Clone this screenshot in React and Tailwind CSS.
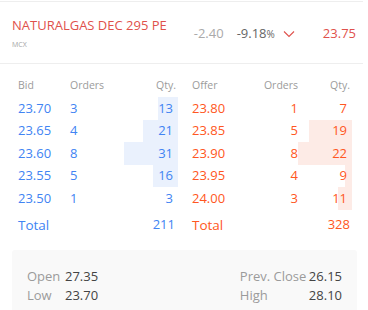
const bids = [
  { price: "23.70", orders: 3, qty: 13, bar: 20 },
  { price: "23.65", orders: 4, qty: 21, bar: 35 },
  { price: "23.60", orders: 8, qty: 31, bar: 54 },
  { price: "23.55", orders: 5, qty: 16, bar: 25 },
  { price: "23.50", orders: 1, qty: 3, bar: 0 },
];

const offers = [
  { price: "23.80", orders: 1, qty: 7, bar: 0 },
  { price: "23.85", orders: 5, qty: 19, bar: 43 },
  { price: "23.90", orders: 8, qty: 22, bar: 54 },
  { price: "23.95", orders: 4, qty: 9, bar: 7 },
  { price: "24.00", orders: 3, qty: 11, bar: 14 },
];

function App() {
  return (
    <div className="w-[368px] h-[310px] overflow-hidden bg-white font-['Open_Sans',sans-serif]">
      <div className="w-[363px] border-t border-[#eeeeee] mt-px">
        {/* Instrument header */}
        <div className="flex items-center h-[62px] border-b border-[#eeeeee] pl-[12px] pr-[7px]">
          <div className="flex-1 pt-[1px]">
            <div className="text-[13px] leading-[18px] text-[#df514c]">NATURALGAS DEC 295 PE</div>
            <div className="text-[7px] leading-[10px] mt-[6px] text-[#a5a5a5]">MCX</div>
          </div>
          <div className="flex items-center text-[13px] pt-[2px]">
            <span className="text-[#aaaaaa]">-2.40</span>
            <span className="ml-[13px] text-[#666666]">
              -9.18<span className="text-[10px]">%</span>
            </span>
            <svg className="ml-[8px]" width="12" height="8" viewBox="0 0 12 8" fill="none">
              <path d="M1 1.5 L6 6.5 L11 1.5" stroke="#df514c" strokeWidth="1.1" />
            </svg>
            <span className="ml-[28px] text-[#df514c]">23.75</span>
          </div>
        </div>

        {/* Market depth */}
        <div className="mt-[11px] text-[13px]">
          <div className="flex h-[22px] items-center text-[10.5px] text-[#9b9b9b]">
            <div className="w-[18px]" />
            <div className="w-[52px]">Bid</div>
            <div className="w-[50px]">Orders</div>
            <div className="w-[58px] text-right pr-[2px]">Qty.</div>
            <div className="w-[14px]" />
            <div className="w-[58px]">Offer</div>
            <div className="w-[52px] text-right pr-[4px]">Orders</div>
            <div className="w-[50px] text-right pr-[2px]">Qty.</div>
          </div>
          {bids.map((b, i) => {
            const o = offers[i];
            return (
              <div key={b.price} className="flex h-[22.5px] items-center">
                <div className="w-[18px]" />
                <div className="w-[52px] text-[#4184f3]">{b.price}</div>
                <div className="w-[50px] text-[#4184f3]">{b.orders}</div>
                <div className="relative w-[58px] h-full flex items-center justify-end pr-[5px] text-[#4184f3]">
                  <div className="absolute right-0 top-0 h-full bg-[#eaf1fd]" style={{ width: b.bar }} />
                  <span className="relative">{b.qty}</span>
                </div>
                <div className="w-[14px]" />
                <div className="w-[58px] text-[#ff5722]">{o.price}</div>
                <div className="w-[52px] text-right pr-[4px] text-[#ff5722]">{o.orders}</div>
                <div className="relative w-[50px] h-full flex items-center justify-end pr-[5px] text-[#ff5722]">
                  <div className="absolute right-0 top-0 h-full bg-[#fdebe6]" style={{ width: o.bar }} />
                  <span className="relative">{o.qty}</span>
                </div>
              </div>
            );
          })}
          <div className="flex h-[26px] mt-[2.5px] items-center text-[13.5px]">
            <div className="w-[18px]" />
            <div className="w-[102px] text-[#4184f3]">Total</div>
            <div className="w-[58px] text-right pr-[3px] text-[13px] text-[#4184f3]">211</div>
            <div className="w-[14px]" />
            <div className="w-[110px] text-[#ff5722]">Total</div>
            <div className="w-[50px] text-right pr-[2px] text-[13px] text-[#ff5722]">328</div>
          </div>
        </div>

        {/* OHLC */}
        <div className="mt-[12px] ml-[12px] w-[345px] h-[70px] rounded-t-[3px] bg-[#f9f9f9] px-[15px] pt-[17px] text-[13px] leading-[19px]">
          <div className="flex justify-between">
            <div>
              <div className="flex">
                <span className="w-[38px] text-[#9b9b9b]">Open</span>
                <span className="text-[#444444]">27.35</span>
              </div>
              <div className="flex">
                <span className="w-[38px] text-[#9b9b9b]">Low</span>
                <span className="text-[#444444]">23.70</span>
              </div>
            </div>
            <div>
              <div className="flex">
                <span className="w-[69px] text-[#9b9b9b]">Prev. Close</span>
                <span className="text-[#444444]">26.15</span>
              </div>
              <div className="flex">
                <span className="w-[69px] text-[#9b9b9b]">High</span>
                <span className="text-[#444444]">28.10</span>
              </div>
            </div>
          </div>
        </div>
      </div>
    </div>
  );
}

export default App;
